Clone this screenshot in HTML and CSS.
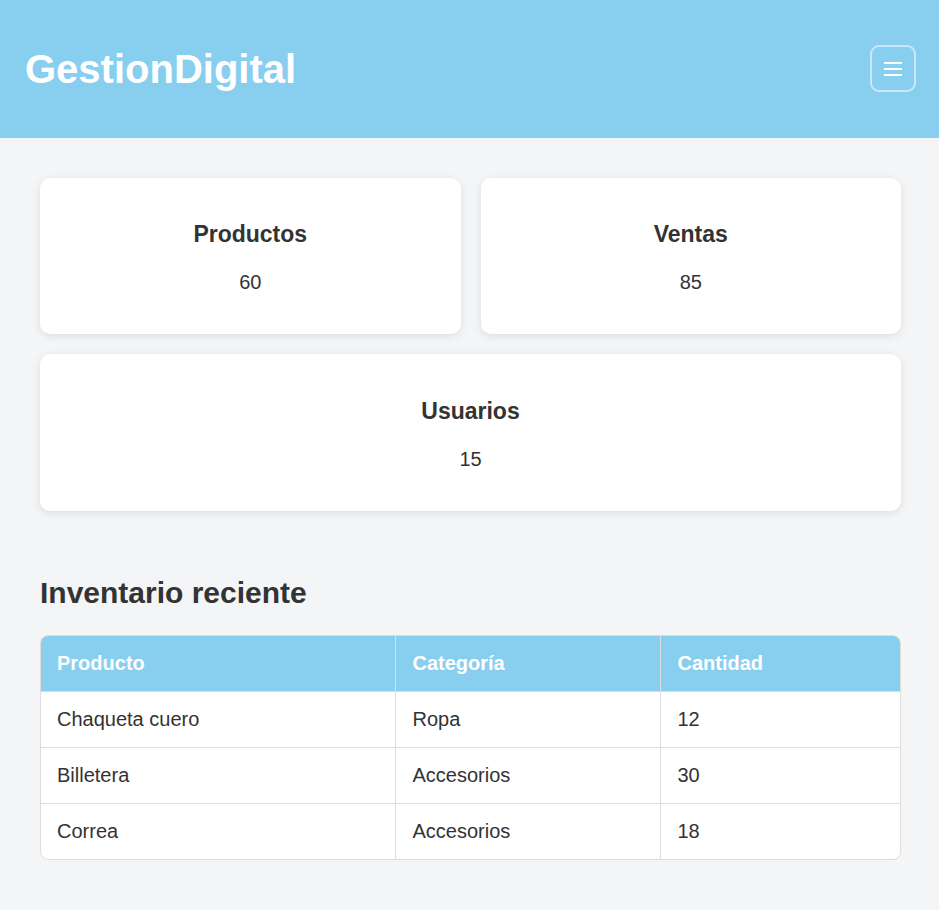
FILE: index.html
```html
<!DOCTYPE html>
<html lang="es">
<head>
<meta charset="utf-8">
<title>GestionDigital</title>
<link rel="stylesheet" href="styles.css">
</head>
<body>
<header class="topbar">
  <h1 class="brand">GestionDigital</h1>
  <button class="menu-btn" aria-label="Menú">
    <svg width="20" height="18" viewBox="0 0 20 18"><rect x="1" y="2" width="18" height="2" fill="#fff"/><rect x="1" y="8" width="18" height="2" fill="#fff"/><rect x="1" y="14" width="18" height="2" fill="#fff"/></svg>
  </button>
</header>
<main class="content">
  <section class="stats">
    <div class="card"><h3 class="card-title">Productos</h3><p class="card-value">60</p></div>
    <div class="card"><h3 class="card-title">Ventas</h3><p class="card-value">85</p></div>
    <div class="card card-wide"><h3 class="card-title">Usuarios</h3><p class="card-value">15</p></div>
  </section>
  <section class="inventory">
    <h2 class="section-title">Inventario reciente</h2>
    <div class="table-wrap">
      <table class="inv-table">
        <colgroup><col class="c1"><col class="c2"><col class="c3"></colgroup>
        <thead><tr><th>Producto</th><th>Categoría</th><th>Cantidad</th></tr></thead>
        <tbody>
          <tr><td>Chaqueta cuero</td><td>Ropa</td><td>12</td></tr>
          <tr><td>Billetera</td><td>Accesorios</td><td>30</td></tr>
          <tr><td>Correa</td><td>Accesorios</td><td>18</td></tr>
        </tbody>
      </table>
    </div>
  </section>
</main>
</body>
</html>
```
FILE: styles.css
```css
* { box-sizing: border-box; }
body {
  margin: 0;
  background: #f4f5f7;
  font-family: "Liberation Sans", Arial, sans-serif;
  color: #333;
}
.topbar {
  height: 138px;
  background: #87ceef;
  display: flex;
  align-items: center;
  justify-content: space-between;
  padding: 0 23px 0 25px;
}
.brand {
  margin: 0;
  font-size: 40px;
  font-weight: bold;
  color: #fff;
  line-height: 46px;
}
.menu-btn {
  width: 46px;
  height: 47px;
  margin-top: -1px;
  border: 2px solid rgba(255,255,255,0.55);
  border-radius: 9px;
  background: transparent;
  display: flex;
  align-items: center;
  justify-content: center;
  padding: 0;
}
.content {
  padding: 40px 38px 40px 40px;
}
.stats {
  display: grid;
  grid-template-columns: 1fr 1fr;
  gap: 20px;
}
.card {
  background: #fff;
  border-radius: 10px;
  box-shadow: 0 2px 8px rgba(0,0,0,0.1);
  text-align: center;
  padding: 43px 20px 41px;
  height: 156px;
}
.card-wide { grid-column: span 2; height: 157px; padding-top: 44px; }
.card-title {
  margin: 0;
  font-size: 23px;
  line-height: 26px;
  font-weight: bold;
}
.card-value {
  margin: 24px 0 0;
  font-size: 20px;
  line-height: 23px;
}
.section-title {
  margin: 65px 0 25px;
  font-size: 30px;
  line-height: 34px;
  font-weight: bold;
}
.table-wrap {
  border-radius: 8px;
  overflow: hidden;
  border: 1px solid #ddd;
  background: #fff;
}
.inv-table {
  width: 100%;
  border-collapse: collapse;
  font-size: 20px;
}
.c1 { width: 354px; }
.c2 { width: 265px; }
.inv-table th, .inv-table td {
  text-align: left;
  padding: 0 16px 0 17px;
  height: 56px;
  border-left: 1px solid #ddd;
  border-top: 1px solid #ddd;
}
.inv-table th:first-child, .inv-table td:first-child { border-left: none; padding-left: 16px; }
.inv-table thead th {
  background: #87ceef;
  color: #fff;
  font-weight: bold;
  border-top: none;
  height: 55px;
}
```
